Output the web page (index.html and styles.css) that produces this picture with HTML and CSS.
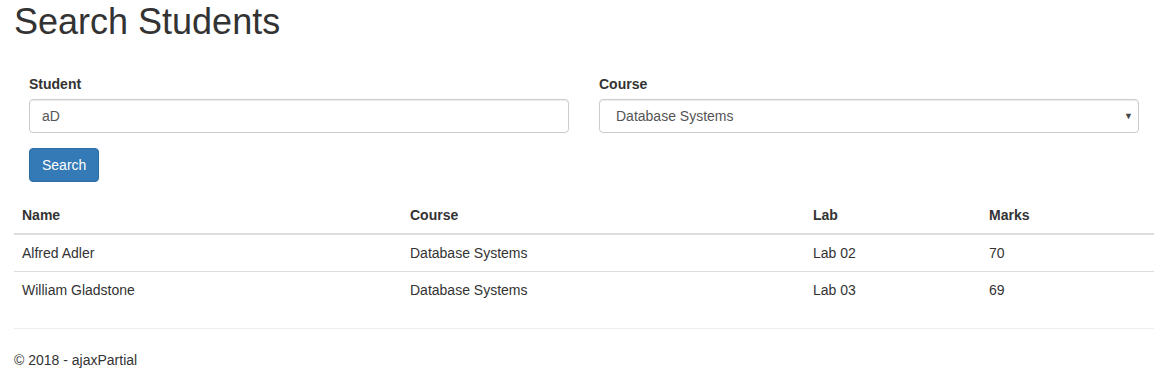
FILE: index.html
```html
<!DOCTYPE html>
<html lang="en">

<head>
    <meta charset="UTF-8">
    <meta name="viewport" content="width=device-width, initial-scale=1.0">
    <title>Search Students - ajaxPartial</title>

    <link rel="stylesheet" href="styles.css">
</head>

<body>
    <div class="body-content">
        <h1 class="page-title">Search Students</h1>

        <form class="search-form">
            <div class="form-row">
                <div class="form-group">
                    <label for="student">Student</label>
                    <input type="text" id="student" class="form-control" value="aD">
                </div>
                <div class="form-group">
                    <label for="course">Course</label>
                    <div class="select-wrap">
                        <select id="course" class="form-control">
                            <option selected>Database Systems</option>
                        </select>
                        <span class="caret">&#9660;</span>
                    </div>
                </div>
            </div>
            <div class="form-actions">
                <button type="button" class="btn btn-primary">Search</button>
            </div>
        </form>

        <table class="table">
            <thead>
                <tr>
                    <th class="col-name">Name</th>
                    <th class="col-course">Course</th>
                    <th class="col-lab">Lab</th>
                    <th class="col-marks">Marks</th>
                </tr>
            </thead>
            <tbody>
                <tr>
                    <td>Alfred Adler</td>
                    <td>Database Systems</td>
                    <td>Lab 02</td>
                    <td>70</td>
                </tr>
                <tr>
                    <td>William Gladstone</td>
                    <td>Database Systems</td>
                    <td>Lab 03</td>
                    <td>69</td>
                </tr>
            </tbody>
        </table>

        <hr>
        <footer>
            <p>&copy; 2018 - ajaxPartial</p>
        </footer>
    </div>
</body>

</html>
```

FILE: styles.css
```css
* {
    box-sizing: border-box;
}

body {
    margin: 0;
    font-family: "Liberation Sans", Arial, sans-serif;
    font-size: 14px;
    line-height: 20px;
    color: #333;
    background-color: #fff;
}

.body-content {
    width: 1140px;
    margin-left: 14px;
}

.page-title {
    margin: 0;
    font-size: 36px;
    font-weight: 500;
    line-height: 1.1;
    padding-top: 2px;
}

.search-form {
    padding-top: 32px;
}

.form-row {
    display: flex;
}

.form-group {
    flex: 1;
    padding: 0 15px;
    margin-bottom: 15px;
}

label {
    display: block;
    font-weight: bold;
    margin-bottom: 5px;
}

.form-control {
    display: block;
    width: 100%;
    height: 34px;
    padding: 6px 12px;
    font-family: inherit;
    font-size: 14px;
    line-height: 20px;
    color: #555;
    background-color: #fff;
    border: 1px solid #ccc;
    border-radius: 4px;
    box-shadow: inset 0 1px 1px rgba(0, 0, 0, .075);
    outline: none;
}

.select-wrap {
    position: relative;
}

select.form-control {
    appearance: none;
    -webkit-appearance: none;
    padding-left: 16px;
}

.caret {
    position: absolute;
    right: 6px;
    top: 11px;
    font-size: 9px;
    line-height: 12px;
    color: #444;
    pointer-events: none;
}

.form-actions {
    padding: 0 15px;
    margin-bottom: 15px;
}

.btn {
    display: inline-block;
    height: 34px;
    padding: 6px 12px;
    font-family: inherit;
    font-size: 14px;
    line-height: 20px;
    border: 1px solid transparent;
    border-radius: 4px;
    cursor: pointer;
}

.btn-primary {
    color: #fff;
    background-color: #337ab7;
    border-color: #2e6da4;
}

.table {
    width: 100%;
    border-collapse: collapse;
    border-spacing: 0;
    margin-bottom: 20px;
}

.table th,
.table td {
    padding: 8px;
    text-align: left;
    vertical-align: top;
    line-height: 20px;
}

.table th {
    border-bottom: 2px solid #ddd;
}

.table td {
    border-top: 1px solid #ddd;
}

.table tbody tr:first-child td {
    border-top: 0;
}

.col-name {
    width: 388px;
}

.col-course {
    width: 403px;
}

.col-lab {
    width: 176px;
}

hr {
    margin: 0;
    border: 0;
    border-top: 1px solid #eee;
}

footer p {
    margin: 21px 0 10px;
}
```
